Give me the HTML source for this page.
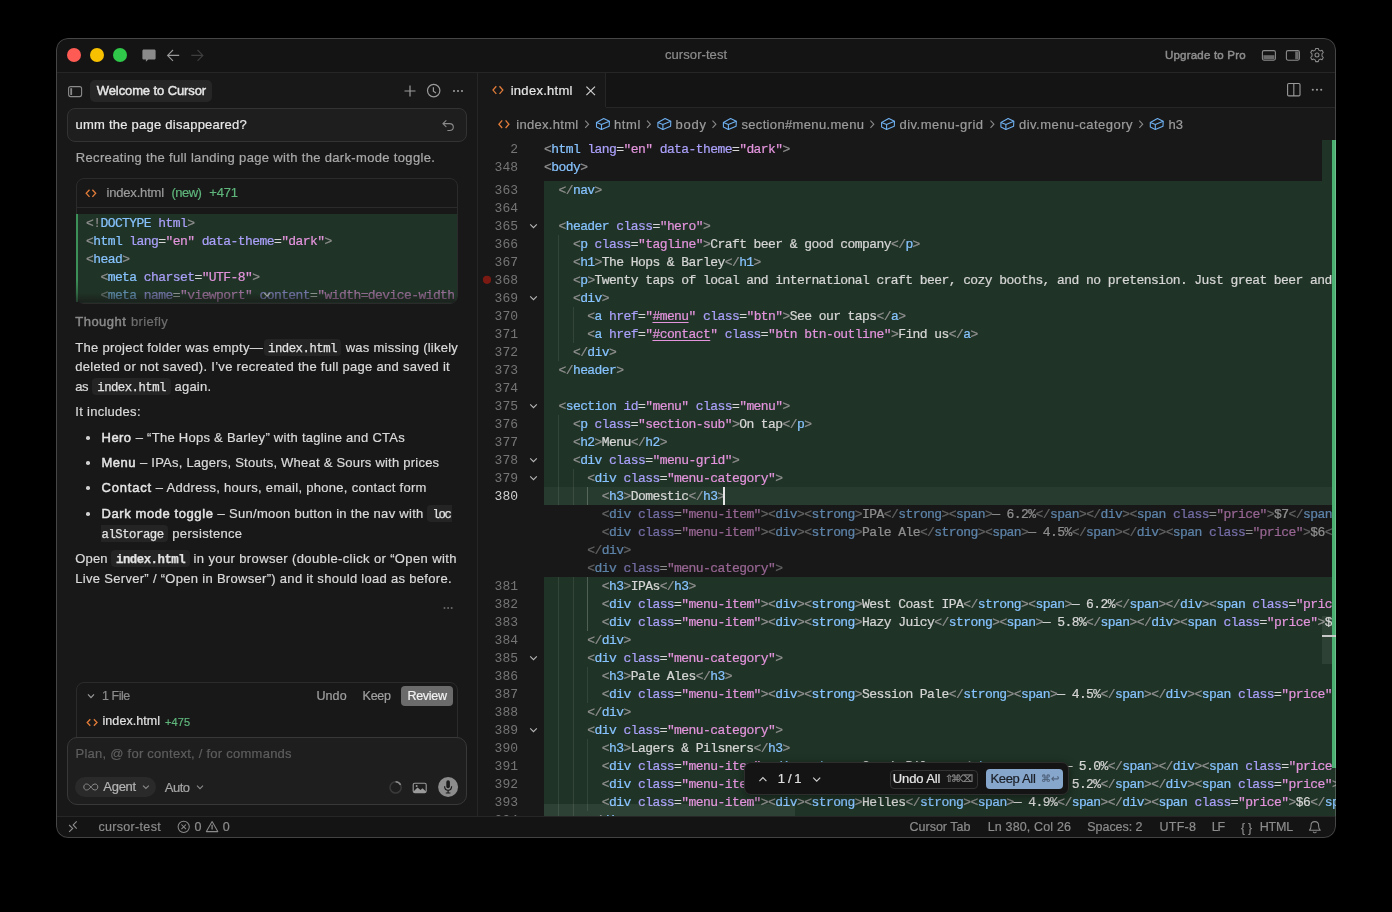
<!DOCTYPE html><html><head><meta charset="utf-8"><style>
*{margin:0;padding:0;box-sizing:border-box}
html,body{width:1392px;height:912px;background:#000;overflow:hidden}
#win{position:absolute;left:56px;top:38px;width:1280px;height:800px;border-radius:12px;overflow:hidden;background:#181818}
#win:after{content:"";position:absolute;left:0;top:0;right:0;bottom:0;border-radius:12px;border:1px solid rgba(255,255,255,0.2);pointer-events:none}
#in{position:absolute;left:-56px;top:-38px;width:1392px;height:912px;will-change:transform}
.b{position:absolute}
.t{position:absolute;white-space:pre;line-height:1}
.code{position:absolute;white-space:pre;font-family:"Liberation Mono",monospace;font-size:13px;letter-spacing:-0.5754px;line-height:18px;-webkit-text-stroke:0.22px currentColor}
.ln{text-align:right;letter-spacing:0;-webkit-text-stroke:0}
.s{font-family:"Liberation Sans",sans-serif;-webkit-text-stroke:0.2px currentColor}
.sb{-webkit-text-stroke:0.45px currentColor}
.m{font-family:"Liberation Mono",monospace}
.cp{color:#8f8f8f}.ct{color:#87c3ff}.ca{color:#aaa0fa}.cs{color:#e394dc}.cx{color:#d6d6d6}.ce{color:#d6d6d6}
u{text-decoration:underline;text-underline-offset:2px}
svg{position:absolute;overflow:visible}
</style></head><body><div id="win"><div id="in"><div class="b" style="left:57px;top:39px;width:1278px;height:33px;background:#141414;"></div><div class="b" style="left:57px;top:72px;width:1278px;height:1px;background:#262626;"></div><div class="b" style="left:57px;top:73px;width:420px;height:743px;background:#181818;"></div><div class="b" style="left:477px;top:73px;width:1px;height:743px;background:#262626;"></div><div class="b" style="left:478px;top:73px;width:857px;height:34px;background:#141414;"></div><div class="b" style="left:478px;top:107px;width:857px;height:1px;background:#262626;"></div><div class="b" style="left:478px;top:73px;width:128px;height:35px;background:#181818;"></div><div class="b" style="left:605px;top:73px;width:1px;height:34px;background:#262626;"></div><div class="b" style="left:478px;top:108px;width:857px;height:708px;background:#181818;"></div><div class="b" style="left:57px;top:816px;width:1278px;height:1px;background:#262626;"></div><div class="b" style="left:57px;top:817px;width:1278px;height:21px;background:#141414;"></div><div class="b" style="left:67px;top:48px;width:14px;height:14px;background:#ff5b55;border-radius:50%;"></div><div class="b" style="left:90px;top:48px;width:14px;height:14px;background:#f7c100;border-radius:50%;"></div><div class="b" style="left:113px;top:48px;width:14px;height:14px;background:#30c84a;border-radius:50%;"></div><div id="td15eeacd" class="t s" style="left:665.00px;top:48.00px;font-size:13px;color:#8c8c8c;font-weight:400;letter-spacing:0.069px;">cursor-test</div><div id="tadd8f4c6" class="t s sb" style="left:1165.00px;top:49.87px;font-size:11.5px;color:#8e8e8e;font-weight:400;letter-spacing:0.200px;">Upgrade to Pro</div><svg style="left:0;top:0" width="1392" height="912"><rect x="68.6" y="86.6" width="13" height="10" rx="2" fill="none" stroke="#8a8a8a" stroke-width="1.1"/><rect x="70.3" y="88.2" width="1.8" height="6.8" fill="#8a8a8a"/><path d="M410 85.5V96.5M404.5 91H415.5" stroke="#9a9a9a" stroke-width="1.2"/><circle cx="433.7" cy="90.6" r="6.2" fill="none" stroke="#9a9a9a" stroke-width="1.2"/><path d="M433.4 87.2V91.2L436 93" fill="none" stroke="#9a9a9a" stroke-width="1.2"/><circle cx="454" cy="91" r="1.05" fill="#9a9a9a"/><circle cx="458" cy="91" r="1.05" fill="#9a9a9a"/><circle cx="462" cy="91" r="1.05" fill="#9a9a9a"/></svg><div class="b" style="left:90px;top:80px;width:122px;height:22px;background:#262626;border-radius:5px;"></div><div id="tc6bb0ed5" class="t s sb" style="left:96.80px;top:84.40px;font-size:13px;color:#e6e6e6;font-weight:400;letter-spacing:-0.107px;">Welcome to Cursor</div><div class="b" style="left:66.5px;top:108px;width:400.5px;height:34px;background:#1e1e1e;border:1px solid #333333;border-radius:8px;"></div><div id="t879af190" class="t s" style="left:75.50px;top:118.20px;font-size:13px;color:#e8e8e8;font-weight:400;letter-spacing:0.241px;">umm the page disappeared?</div><svg style="left:0;top:0" width="1392" height="912"><path d="M446 120.6L442.9 123.6L446 126.6M443.2 123.6H449.6C451.9 123.6 453.3 125 453.3 127.1C453.3 129.2 451.9 130.5 449.6 130.5H447.8" fill="none" stroke="#8a8a8a" stroke-width="1.1" stroke-linecap="round" stroke-linejoin="round"/></svg><div id="t828040c6" class="t s" style="left:75.80px;top:151.00px;font-size:13px;color:#a9a9a9;font-weight:400;letter-spacing:0.335px;">Recreating the full landing page with the dark-mode toggle.</div><div class="b" style="left:75.5px;top:178px;width:382px;height:125.5px;border:1px solid #2b2b2b;border-radius:8px;background:#181818;overflow:hidden;"></div><div class="b" style="left:76.5px;top:207px;width:380px;height:1px;background:#2b2b2b;"></div><div class="b" style="left:76.5px;top:214px;width:380px;height:88.5px;background:#1f3326;border-bottom-left-radius:7px;border-bottom-right-radius:7px;"></div><div class="b" style="left:76px;top:214px;width:2.2px;height:88px;background:#3c8f58;"></div><svg style="left:0;top:0" width="1392" height="912"><path d="M89.5 189.7L86.2 193.3L89.5 196.9M92.4 189.7L95.7 193.3L92.4 196.9" fill="none" stroke="#e07b39" stroke-width="1.3"/></svg><div id="tf075c879" class="t s" style="left:106.50px;top:185.70px;font-size:13px;color:#9c9c9c;font-weight:400;letter-spacing:-0.183px;">index.html</div><div id="t52c8d958" class="t s" style="left:171.60px;top:185.70px;font-size:13px;color:#5fb67c;font-weight:400;letter-spacing:-0.554px;">(new)</div><div id="tf7323e9f" class="t s" style="left:209.30px;top:185.70px;font-size:13px;color:#5fb67c;font-weight:400;letter-spacing:-0.166px;">+471</div><div class="b" style="left:78.2px;top:214px;width:376.5px;height:88.5px;overflow:visible;clip-path:inset(0 0 0 -3px)"><div class="code" style="left:7.80px;top:1px"><span class="cp">&lt;!</span><span class="ct">DOCTYPE</span><span class="cx"> </span><span class="ca">html</span><span class="cp">&gt;</span></div><div class="code" style="left:7.80px;top:19px"><span class="cp">&lt;</span><span class="ct">html</span><span class="cx"> </span><span class="ca">lang</span><span class="ce">=</span><span class="cs">&quot;en&quot;</span><span class="cx"> </span><span class="ca">data-theme</span><span class="ce">=</span><span class="cs">&quot;dark&quot;</span><span class="cp">&gt;</span></div><div class="code" style="left:7.80px;top:37px"><span class="cp">&lt;</span><span class="ct">head</span><span class="cp">&gt;</span></div><div class="code" style="left:7.80px;top:55px"><span class="cx">  </span><span class="cp">&lt;</span><span class="ct">meta</span><span class="cx"> </span><span class="ca">charset</span><span class="ce">=</span><span class="cs">&quot;UTF-8&quot;</span><span class="cp">&gt;</span></div><div class="code" style="left:7.80px;top:73px"><span class="cx">  </span><span class="cp">&lt;</span><span class="ct">meta</span><span class="cx"> </span><span class="ca">name</span><span class="ce">=</span><span class="cs">&quot;viewport&quot;</span><span class="cx"> </span><span class="ca">content</span><span class="ce">=</span><span class="cs">&quot;width=device-width, initial-scale=1.0&quot;</span><span class="cp">&gt;</span></div><div class="b" style="left:-3px;top:66px;width:382px;height:23px;background:linear-gradient(rgba(31,51,38,0),rgba(31,51,38,0.4) 55%,rgba(24,24,24,0.7))"></div></div><div id="t74a5e786" class="t s sb" style="left:75.30px;top:315.30px;font-size:13px;color:#8a8a8a;font-weight:400;letter-spacing:0.466px;">Thought</div><div id="tc1c4336b" class="t s" style="left:130.90px;top:315.30px;font-size:13px;color:#6e6e6e;font-weight:400;letter-spacing:0.352px;">briefly</div><div id="ta1b95671" class="t s" style="left:75.30px;top:341.00px;font-size:13px;color:#dadada;font-weight:400;letter-spacing:0.268px;">The project folder was empty—</div><div class="b" style="left:263.8px;top:339.3px;width:77.59999999999997px;height:16.5px;background:#242424;border-radius:4px;"></div><div id="ta5496e7f" class="t m" style="left:268.00px;top:343.38px;font-size:12.3px;color:#e2e2e2;font-weight:400;letter-spacing:-0.477px;-webkit-text-stroke:0.25px currentColor;">index.html</div><div id="t32df608d" class="t s" style="left:345.70px;top:341.00px;font-size:13px;color:#dadada;font-weight:400;letter-spacing:0.253px;">was missing (likely</div><div id="t8a17da4b" class="t s" style="left:75.30px;top:360.30px;font-size:13px;color:#dadada;font-weight:400;letter-spacing:0.288px;">deleted or not saved). I’ve recreated the full page and saved it</div><div id="t6ef56c82" class="t s" style="left:75.30px;top:380.00px;font-size:13px;color:#dadada;font-weight:400;letter-spacing:-0.634px;">as</div><div class="b" style="left:91.9px;top:378.3px;width:78.69999999999999px;height:16.5px;background:#242424;border-radius:4px;"></div><div id="t4965be91" class="t m" style="left:97.30px;top:382.38px;font-size:12.3px;color:#e2e2e2;font-weight:400;letter-spacing:-0.522px;-webkit-text-stroke:0.25px currentColor;">index.html</div><div id="t51041de5" class="t s" style="left:174.50px;top:380.00px;font-size:13px;color:#dadada;font-weight:400;letter-spacing:0.216px;">again.</div><div id="t721da2a4" class="t s" style="left:75.30px;top:405.10px;font-size:13px;color:#dadada;font-weight:400;letter-spacing:0.277px;">It includes:</div><div class="b" style="left:86.1px;top:436.3px;width:3.5px;height:3.5px;background:#d0d0d0;border-radius:50%;"></div><div class="b" style="left:86.1px;top:461.3px;width:3.5px;height:3.5px;background:#d0d0d0;border-radius:50%;"></div><div class="b" style="left:86.1px;top:486.3px;width:3.5px;height:3.5px;background:#d0d0d0;border-radius:50%;"></div><div class="b" style="left:86.1px;top:512.3px;width:3.5px;height:3.5px;background:#d0d0d0;border-radius:50%;"></div><div id="tf601a51b" class="t s sb" style="left:101.60px;top:431.00px;font-size:13px;color:#e6e6e6;font-weight:400;letter-spacing:0.438px;">Hero</div><div id="t96851f90" class="t s" style="left:135.70px;top:431.00px;font-size:13px;color:#dadada;font-weight:400;letter-spacing:0.271px;">– “The Hops &amp; Barley” with tagline and CTAs</div><div id="t0cf896a4" class="t s sb" style="left:101.60px;top:456.00px;font-size:13px;color:#e6e6e6;font-weight:400;letter-spacing:0.423px;">Menu</div><div id="t62314827" class="t s" style="left:140.00px;top:456.00px;font-size:13px;color:#dadada;font-weight:400;letter-spacing:0.230px;">– IPAs, Lagers, Stouts, Wheat &amp; Sours with prices</div><div id="t1d1fe37d" class="t s sb" style="left:101.60px;top:481.00px;font-size:13px;color:#e6e6e6;font-weight:400;letter-spacing:0.781px;">Contact</div><div id="t1706ff14" class="t s" style="left:155.80px;top:481.00px;font-size:13px;color:#dadada;font-weight:400;letter-spacing:0.294px;">– Address, hours, email, phone, contact form</div><div id="t22968386" class="t s sb" style="left:101.60px;top:507.00px;font-size:13px;color:#e6e6e6;font-weight:400;letter-spacing:0.578px;">Dark mode toggle</div><div id="tab5aab11" class="t s" style="left:217.60px;top:507.00px;font-size:13px;color:#dadada;font-weight:400;letter-spacing:0.285px;">– Sun/moon button in the nav with</div><div class="b" style="left:427.1px;top:505.3px;width:25px;height:16.5px;background:#242424;border-top-left-radius:4px;border-bottom-left-radius:4px;"></div><div id="te7d1aaec" class="t m" style="left:432.40px;top:509.38px;font-size:12.3px;color:#e2e2e2;font-weight:400;letter-spacing:-1.370px;-webkit-text-stroke:0.25px currentColor;">loc</div><div class="b" style="left:100.9px;top:525.0999999999999px;width:66.8px;height:16.5px;background:#242424;border-top-right-radius:4px;border-bottom-right-radius:4px;"></div><div id="tc21dcd90" class="t m" style="left:101.50px;top:529.18px;font-size:12.3px;color:#e2e2e2;font-weight:400;letter-spacing:-0.478px;-webkit-text-stroke:0.25px currentColor;">alStorage</div><div id="t7f447750" class="t s" style="left:172.30px;top:526.80px;font-size:13px;color:#dadada;font-weight:400;letter-spacing:0.332px;">persistence</div><div id="t3006b14e" class="t s" style="left:75.30px;top:551.80px;font-size:13px;color:#dadada;font-weight:400;letter-spacing:0.129px;">Open</div><div class="b" style="left:111.3px;top:550.0999999999999px;width:78.3px;height:16.5px;background:#242424;border-radius:4px;"></div><div id="t68cc650a" class="t m" style="left:116.00px;top:554.18px;font-size:12.3px;color:#e2e2e2;font-weight:700;letter-spacing:-0.466px;-webkit-text-stroke:0.25px currentColor;">index.html</div><div id="tdcade9bb" class="t s" style="left:193.60px;top:551.80px;font-size:13px;color:#dadada;font-weight:400;letter-spacing:0.374px;">in your browser (double-click or “Open with</div><div id="t813bbf34" class="t s" style="left:75.30px;top:571.60px;font-size:13px;color:#dadada;font-weight:400;letter-spacing:0.300px;">Live Server” / “Open in Browser”) and it should load as before.</div><svg style="left:0;top:0" width="1392" height="912"><circle cx="444.5" cy="608" r="1" fill="#6a6a6a"/><circle cx="448.1" cy="608" r="1" fill="#6a6a6a"/><circle cx="451.7" cy="608" r="1" fill="#6a6a6a"/></svg><div class="b" style="left:75.5px;top:682.3px;width:382px;height:80px;border:1px solid #2b2b2b;border-radius:8px;"></div><svg style="left:0;top:0" width="1392" height="912"><path d="M88 694.3L91 697.6L94 694.3" fill="none" stroke="#9a9a9a" stroke-width="1.2"/><path d="M90.3 719.2L87.2 722.5L90.3 725.8M93.9 719.2L97 722.5L93.9 725.8" fill="none" stroke="#e07b39" stroke-width="1.3"/></svg><div id="tfdf42e7a" class="t s" style="left:102.00px;top:690.42px;font-size:12.5px;color:#8c8c8c;font-weight:400;letter-spacing:-0.456px;">1 File</div><div id="tce027de3" class="t s" style="left:316.40px;top:690.42px;font-size:12.5px;color:#a0a0a0;font-weight:400;letter-spacing:0.103px;">Undo</div><div id="t6251e334" class="t s" style="left:362.60px;top:690.42px;font-size:12.5px;color:#a0a0a0;font-weight:400;letter-spacing:-0.301px;">Keep</div><div class="b" style="left:400.8px;top:686px;width:52.2px;height:20px;background:#6b6b6b;border-radius:4px;"></div><div id="t03a95235" class="t s" style="left:407.40px;top:690.42px;font-size:12.5px;color:#f2f2f2;font-weight:400;letter-spacing:-0.280px;">Review</div><div id="t7c64cf4c" class="t s" style="left:102.50px;top:715.42px;font-size:12.5px;color:#e0e0e0;font-weight:400;letter-spacing:0.068px;">index.html</div><div id="t8b73ca46" class="t s" style="left:165.00px;top:716.69px;font-size:11px;color:#5fb67c;font-weight:400;letter-spacing:0.106px;">+475</div><div class="b" style="left:66.8px;top:737px;width:400px;height:68.4px;background:#1e1e1e;border:1px solid #383838;border-radius:10px;"></div><div id="t185dc931" class="t s" style="left:75.50px;top:747.30px;font-size:13px;color:#5e5e5e;font-weight:400;letter-spacing:0.251px;">Plan, @ for context, / for commands</div><div class="b" style="left:75.2px;top:777.4px;width:80.6px;height:19.7px;background:#2a2a2a;border-radius:10px;"></div><svg style="left:0;top:0" width="1392" height="912"><path d="M90.8 787C89.2 785 88 784 86.5 784C84.9 784 83.8 785.3 83.8 787C83.8 788.7 84.9 790 86.5 790C88 790 89.2 789 90.8 787C92.4 785 93.6 784 95.1 784C96.7 784 97.8 785.3 97.8 787C97.8 788.7 96.7 790 95.1 790C93.6 790 92.4 789 90.8 787Z" fill="none" stroke="#8a8a8a" stroke-width="1"/><path d="M143 785.6L145.9 788.4L148.8 785.6" fill="none" stroke="#8a8a8a" stroke-width="1.1"/><path d="M197 785.6L200 788.6L203 785.6" fill="none" stroke="#8a8a8a" stroke-width="1.1"/><circle cx="395.6" cy="787.4" r="5.6" fill="none" stroke="#3a3a3a" stroke-width="1.5"/><path d="M395.6 781.8A5.6 5.6 0 0 1 400.6 784.9" fill="none" stroke="#8a8a8a" stroke-width="1.5"/><rect x="413.2" y="783.2" width="13" height="9.4" rx="1.5" fill="none" stroke="#9a9a9a" stroke-width="1.1"/><path d="M413.5 791.5L417.5 787.5L420.5 790L422.5 788.3L426 791.5V792.3H413.5Z" fill="#9a9a9a"/><circle cx="416.6" cy="785.9" r="1" fill="#9a9a9a"/><circle cx="448.1" cy="787" r="10" fill="#8c8c8c"/><rect x="446.3" y="780.3" width="3.6" height="8" rx="1.8" fill="#1a1a1a"/><path d="M444.6 786.3C444.6 788.6 446.1 790.3 448.1 790.3C450.1 790.3 451.6 788.6 451.6 786.3M448.1 790.3V792.8M445.8 793H450.4" fill="none" stroke="#1a1a1a" stroke-width="1.2"/></svg><div id="t2902c2db" class="t s" style="left:103.30px;top:780.30px;font-size:13px;color:#b4b4b4;font-weight:400;letter-spacing:-0.271px;">Agent</div><div id="t8ec8ce1f" class="t s" style="left:164.70px;top:781.00px;font-size:13px;color:#a6a6a6;font-weight:400;letter-spacing:-0.450px;">Auto</div><svg style="left:0;top:0" width="1392" height="912"><path d="M143.8 49.6H154.2C155 49.6 155.6 50.2 155.6 51V58.2C155.6 59 155 59.6 154.2 59.6H148.3L145.9 61.8V59.6H143.8C143 59.6 142.4 59 142.4 58.2V51C142.4 50.2 143 49.6 143.8 49.6Z" fill="#8a8a8a"/><path d="M173 50L167.6 55.4L173 60.8M167.8 55.4H179.2" fill="none" stroke="#9a9a9a" stroke-width="1.1"/><path d="M197.5 50L202.9 55.4L197.5 60.8M202.7 55.4H191.3" fill="none" stroke="#3e3e3e" stroke-width="1.1"/><rect x="1262.4" y="50.6" width="13" height="9.6" rx="1.6" fill="none" stroke="#8a8a8a" stroke-width="1.1"/><rect x="1263.4" y="55.2" width="11" height="4.2" fill="#6a6a6a"/><rect x="1286.4" y="50.6" width="13" height="9.6" rx="1.6" fill="none" stroke="#8a8a8a" stroke-width="1.1"/><rect x="1295.2" y="51.5" width="3.4" height="7.8" fill="#6a6a6a"/><g transform="translate(1317,55)"><path d="M-1.3 -6.6H1.3L1.8 -4.9L3.3 -4.1L5 -4.8L6.3 -2.5L5 -1.2V1.2L6.3 2.5L5 4.8L3.3 4.1L1.8 4.9L1.3 6.6H-1.3L-1.8 4.9L-3.3 4.1L-5 4.8L-6.3 2.5L-5 1.2V-1.2L-6.3 -2.5L-5 -4.8L-3.3 -4.1L-1.8 -4.9Z" fill="none" stroke="#8a8a8a" stroke-width="1.05" stroke-linejoin="round"/><circle r="2" fill="none" stroke="#8a8a8a" stroke-width="1.05"/></g><rect x="1287.6" y="83.5" width="12.4" height="12.4" rx="1.2" fill="none" stroke="#9a9a9a" stroke-width="1.1"/><path d="M1293.8 83.5V95.9" stroke="#9a9a9a" stroke-width="1.1"/><circle cx="1312.8" cy="89.8" r="1.05" fill="#9a9a9a"/><circle cx="1317" cy="89.8" r="1.05" fill="#9a9a9a"/><circle cx="1321.2" cy="89.8" r="1.05" fill="#9a9a9a"/><path d="M496.3 86.3L493 90.1L496.3 93.9M499.5 86.3L502.8 90.1L499.5 93.9" fill="none" stroke="#e07b39" stroke-width="1.3"/><path d="M586.4 86.6L595 95.2M595 86.6L586.4 95.2" stroke="#cfcfcf" stroke-width="1.2"/><path d="M502.2 120.4L498.9 124.2L502.2 128M505.6 120.4L508.9 124.2L505.6 128" fill="none" stroke="#e07b39" stroke-width="1.3"/></svg><div id="tf72479a1" class="t s" style="left:510.70px;top:84.00px;font-size:13px;color:#e6e6e6;font-weight:400;letter-spacing:0.283px;">index.html</div><svg style="left:0;top:0" width="1392" height="912"><g transform="translate(595.6,124.2)" fill="none" stroke="#6fb0f0" stroke-width="1.1" stroke-linejoin="round"><path d="M0.9 -1.7L8.1 -5.6L13.8 -2.9L13.6 2.05L5.9 5.3L0.9 2.85Z"/><path d="M0.9 -1.7L5.9 0.3L13.8 -2.9M5.9 0.3V5.3"/></g><path d="M585.2 120.6L588.6 124.2L585.2 127.8" fill="none" stroke="#8a8a8a" stroke-width="1.1"/><g transform="translate(657.0,124.2)" fill="none" stroke="#6fb0f0" stroke-width="1.1" stroke-linejoin="round"><path d="M0.9 -1.7L8.1 -5.6L13.8 -2.9L13.6 2.05L5.9 5.3L0.9 2.85Z"/><path d="M0.9 -1.7L5.9 0.3L13.8 -2.9M5.9 0.3V5.3"/></g><path d="M647.0 120.6L650.4 124.2L647.0 127.8" fill="none" stroke="#8a8a8a" stroke-width="1.1"/><g transform="translate(722.5,124.2)" fill="none" stroke="#6fb0f0" stroke-width="1.1" stroke-linejoin="round"><path d="M0.9 -1.7L8.1 -5.6L13.8 -2.9L13.6 2.05L5.9 5.3L0.9 2.85Z"/><path d="M0.9 -1.7L5.9 0.3L13.8 -2.9M5.9 0.3V5.3"/></g><path d="M712.5 120.6L715.9 124.2L712.5 127.8" fill="none" stroke="#8a8a8a" stroke-width="1.1"/><g transform="translate(880.7,124.2)" fill="none" stroke="#6fb0f0" stroke-width="1.1" stroke-linejoin="round"><path d="M0.9 -1.7L8.1 -5.6L13.8 -2.9L13.6 2.05L5.9 5.3L0.9 2.85Z"/><path d="M0.9 -1.7L5.9 0.3L13.8 -2.9M5.9 0.3V5.3"/></g><path d="M870.4 120.6L873.8 124.2L870.4 127.8" fill="none" stroke="#8a8a8a" stroke-width="1.1"/><g transform="translate(1000.0,124.2)" fill="none" stroke="#6fb0f0" stroke-width="1.1" stroke-linejoin="round"><path d="M0.9 -1.7L8.1 -5.6L13.8 -2.9L13.6 2.05L5.9 5.3L0.9 2.85Z"/><path d="M0.9 -1.7L5.9 0.3L13.8 -2.9M5.9 0.3V5.3"/></g><path d="M990.5 120.6L993.9 124.2L990.5 127.8" fill="none" stroke="#8a8a8a" stroke-width="1.1"/><g transform="translate(1149.4,124.2)" fill="none" stroke="#6fb0f0" stroke-width="1.1" stroke-linejoin="round"><path d="M0.9 -1.7L8.1 -5.6L13.8 -2.9L13.6 2.05L5.9 5.3L0.9 2.85Z"/><path d="M0.9 -1.7L5.9 0.3L13.8 -2.9M5.9 0.3V5.3"/></g><path d="M1139.3 120.6L1142.7 124.2L1139.3 127.8" fill="none" stroke="#8a8a8a" stroke-width="1.1"/></svg><div id="t18539f13" class="t s" style="left:516.20px;top:117.90px;font-size:13px;color:#9c9c9c;font-weight:400;letter-spacing:0.306px;">index.html</div><div id="tc994fbe6" class="t s" style="left:614.00px;top:117.90px;font-size:13px;color:#9c9c9c;font-weight:400;letter-spacing:0.579px;">html</div><div id="t8711893a" class="t s" style="left:675.40px;top:117.90px;font-size:13px;color:#9c9c9c;font-weight:400;letter-spacing:0.832px;">body</div><div id="ta817c7ab" class="t s" style="left:741.40px;top:117.90px;font-size:13px;color:#9c9c9c;font-weight:400;letter-spacing:0.345px;">section#menu.menu</div><div id="t74ccf8ac" class="t s" style="left:899.50px;top:117.90px;font-size:13px;color:#9c9c9c;font-weight:400;letter-spacing:0.484px;">div.menu-grid</div><div id="t79b9aa23" class="t s" style="left:1019.00px;top:117.90px;font-size:13px;color:#9c9c9c;font-weight:400;letter-spacing:0.470px;">div.menu-category</div><div id="td0aa2b4f" class="t s" style="left:1168.50px;top:117.90px;font-size:13px;color:#9c9c9c;font-weight:400;letter-spacing:0.131px;">h3</div><div class="b" style="left:544px;top:140px;width:792px;height:676px;background:#1f3326;"></div><div class="b" style="left:544px;top:505px;width:792px;height:72px;background:#181818;"></div><div class="b" style="left:558px;top:235px;width:1px;height:18px;background:rgba(255,255,255,0.09);"></div><div class="b" style="left:558px;top:253px;width:1px;height:18px;background:rgba(255,255,255,0.09);"></div><div class="b" style="left:558px;top:271px;width:1px;height:18px;background:rgba(255,255,255,0.09);"></div><div class="b" style="left:558px;top:289px;width:1px;height:18px;background:rgba(255,255,255,0.09);"></div><div class="b" style="left:558px;top:307px;width:1px;height:18px;background:rgba(255,255,255,0.09);"></div><div class="b" style="left:573px;top:307px;width:1px;height:18px;background:rgba(255,255,255,0.09);"></div><div class="b" style="left:558px;top:325px;width:1px;height:18px;background:rgba(255,255,255,0.09);"></div><div class="b" style="left:573px;top:325px;width:1px;height:18px;background:rgba(255,255,255,0.09);"></div><div class="b" style="left:558px;top:343px;width:1px;height:18px;background:rgba(255,255,255,0.09);"></div><div class="b" style="left:558px;top:415px;width:1px;height:18px;background:rgba(255,255,255,0.09);"></div><div class="b" style="left:558px;top:433px;width:1px;height:18px;background:rgba(255,255,255,0.09);"></div><div class="b" style="left:558px;top:451px;width:1px;height:18px;background:rgba(255,255,255,0.09);"></div><div class="b" style="left:558px;top:469px;width:1px;height:18px;background:rgba(255,255,255,0.09);"></div><div class="b" style="left:573px;top:469px;width:1px;height:18px;background:rgba(255,255,255,0.09);"></div><div class="b" style="left:544px;top:487px;width:792px;height:18px;background:rgba(255,255,255,0.045);"></div><div class="b" style="left:558px;top:487px;width:1px;height:18px;background:rgba(255,255,255,0.09);"></div><div class="b" style="left:573px;top:487px;width:1px;height:18px;background:rgba(255,255,255,0.09);"></div><div class="b" style="left:587px;top:487px;width:1px;height:18px;background:rgba(255,255,255,0.22);"></div><div class="b" style="left:558px;top:577px;width:1px;height:18px;background:rgba(255,255,255,0.09);"></div><div class="b" style="left:573px;top:577px;width:1px;height:18px;background:rgba(255,255,255,0.09);"></div><div class="b" style="left:587px;top:577px;width:1px;height:18px;background:rgba(255,255,255,0.22);"></div><div class="b" style="left:558px;top:595px;width:1px;height:18px;background:rgba(255,255,255,0.09);"></div><div class="b" style="left:573px;top:595px;width:1px;height:18px;background:rgba(255,255,255,0.09);"></div><div class="b" style="left:587px;top:595px;width:1px;height:18px;background:rgba(255,255,255,0.22);"></div><div class="b" style="left:558px;top:613px;width:1px;height:18px;background:rgba(255,255,255,0.09);"></div><div class="b" style="left:573px;top:613px;width:1px;height:18px;background:rgba(255,255,255,0.09);"></div><div class="b" style="left:587px;top:613px;width:1px;height:18px;background:rgba(255,255,255,0.22);"></div><div class="b" style="left:558px;top:631px;width:1px;height:18px;background:rgba(255,255,255,0.09);"></div><div class="b" style="left:573px;top:631px;width:1px;height:18px;background:rgba(255,255,255,0.09);"></div><div class="b" style="left:558px;top:649px;width:1px;height:18px;background:rgba(255,255,255,0.09);"></div><div class="b" style="left:573px;top:649px;width:1px;height:18px;background:rgba(255,255,255,0.09);"></div><div class="b" style="left:558px;top:667px;width:1px;height:18px;background:rgba(255,255,255,0.09);"></div><div class="b" style="left:573px;top:667px;width:1px;height:18px;background:rgba(255,255,255,0.09);"></div><div class="b" style="left:587px;top:667px;width:1px;height:18px;background:rgba(255,255,255,0.09);"></div><div class="b" style="left:558px;top:685px;width:1px;height:18px;background:rgba(255,255,255,0.09);"></div><div class="b" style="left:573px;top:685px;width:1px;height:18px;background:rgba(255,255,255,0.09);"></div><div class="b" style="left:587px;top:685px;width:1px;height:18px;background:rgba(255,255,255,0.09);"></div><div class="b" style="left:558px;top:703px;width:1px;height:18px;background:rgba(255,255,255,0.09);"></div><div class="b" style="left:573px;top:703px;width:1px;height:18px;background:rgba(255,255,255,0.09);"></div><div class="b" style="left:558px;top:721px;width:1px;height:18px;background:rgba(255,255,255,0.09);"></div><div class="b" style="left:573px;top:721px;width:1px;height:18px;background:rgba(255,255,255,0.09);"></div><div class="b" style="left:558px;top:739px;width:1px;height:18px;background:rgba(255,255,255,0.09);"></div><div class="b" style="left:573px;top:739px;width:1px;height:18px;background:rgba(255,255,255,0.09);"></div><div class="b" style="left:587px;top:739px;width:1px;height:18px;background:rgba(255,255,255,0.09);"></div><div class="b" style="left:558px;top:757px;width:1px;height:18px;background:rgba(255,255,255,0.09);"></div><div class="b" style="left:573px;top:757px;width:1px;height:18px;background:rgba(255,255,255,0.09);"></div><div class="b" style="left:587px;top:757px;width:1px;height:18px;background:rgba(255,255,255,0.09);"></div><div class="b" style="left:558px;top:775px;width:1px;height:18px;background:rgba(255,255,255,0.09);"></div><div class="b" style="left:573px;top:775px;width:1px;height:18px;background:rgba(255,255,255,0.09);"></div><div class="b" style="left:587px;top:775px;width:1px;height:18px;background:rgba(255,255,255,0.09);"></div><div class="b" style="left:558px;top:793px;width:1px;height:18px;background:rgba(255,255,255,0.09);"></div><div class="b" style="left:573px;top:793px;width:1px;height:18px;background:rgba(255,255,255,0.09);"></div><div class="b" style="left:587px;top:793px;width:1px;height:18px;background:rgba(255,255,255,0.09);"></div><div class="b" style="left:558px;top:811px;width:1px;height:18px;background:rgba(255,255,255,0.09);"></div><div class="b" style="left:573px;top:811px;width:1px;height:18px;background:rgba(255,255,255,0.09);"></div><div class="code" style="left:544px;top:182px"><span class="cx">  </span><span class="cp">&lt;/</span><span class="ct">nav</span><span class="cp">&gt;</span></div><div class="code ln" style="left:478px;width:40px;top:182px;color:#757575">363</div><div class="code" style="left:544px;top:200px"></div><div class="code ln" style="left:478px;width:40px;top:200px;color:#757575">364</div><div class="code" style="left:544px;top:218px"><span class="cx">  </span><span class="cp">&lt;</span><span class="ct">header</span><span class="cx"> </span><span class="ca">class</span><span class="ce">=</span><span class="cs">&quot;hero&quot;</span><span class="cp">&gt;</span></div><div class="code ln" style="left:478px;width:40px;top:218px;color:#757575">365</div><div class="code" style="left:544px;top:236px"><span class="cx">    </span><span class="cp">&lt;</span><span class="ct">p</span><span class="cx"> </span><span class="ca">class</span><span class="ce">=</span><span class="cs">&quot;tagline&quot;</span><span class="cp">&gt;</span><span class="cx">Craft beer &amp; good company</span><span class="cp">&lt;/</span><span class="ct">p</span><span class="cp">&gt;</span></div><div class="code ln" style="left:478px;width:40px;top:236px;color:#757575">366</div><div class="code" style="left:544px;top:254px"><span class="cx">    </span><span class="cp">&lt;</span><span class="ct">h1</span><span class="cp">&gt;</span><span class="cx">The Hops &amp; Barley</span><span class="cp">&lt;/</span><span class="ct">h1</span><span class="cp">&gt;</span></div><div class="code ln" style="left:478px;width:40px;top:254px;color:#757575">367</div><div class="code" style="left:544px;top:272px"><span class="cx">    </span><span class="cp">&lt;</span><span class="ct">p</span><span class="cp">&gt;</span><span class="cx">Twenty taps of local and international craft beer, cozy booths, and no pretension. Just great beer and good people.</span><span class="cp">&lt;/</span><span class="ct">p</span><span class="cp">&gt;</span></div><div class="code ln" style="left:478px;width:40px;top:272px;color:#757575">368</div><div class="code" style="left:544px;top:290px"><span class="cx">    </span><span class="cp">&lt;</span><span class="ct">div</span><span class="cp">&gt;</span></div><div class="code ln" style="left:478px;width:40px;top:290px;color:#757575">369</div><div class="code" style="left:544px;top:308px"><span class="cx">      </span><span class="cp">&lt;</span><span class="ct">a</span><span class="cx"> </span><span class="ca">href</span><span class="ce">=</span><span class="cs">&quot;<u>#menu</u>&quot;</span><span class="cx"> </span><span class="ca">class</span><span class="ce">=</span><span class="cs">&quot;btn&quot;</span><span class="cp">&gt;</span><span class="cx">See our taps</span><span class="cp">&lt;/</span><span class="ct">a</span><span class="cp">&gt;</span></div><div class="code ln" style="left:478px;width:40px;top:308px;color:#757575">370</div><div class="code" style="left:544px;top:326px"><span class="cx">      </span><span class="cp">&lt;</span><span class="ct">a</span><span class="cx"> </span><span class="ca">href</span><span class="ce">=</span><span class="cs">&quot;<u>#contact</u>&quot;</span><span class="cx"> </span><span class="ca">class</span><span class="ce">=</span><span class="cs">&quot;btn btn-outline&quot;</span><span class="cp">&gt;</span><span class="cx">Find us</span><span class="cp">&lt;/</span><span class="ct">a</span><span class="cp">&gt;</span></div><div class="code ln" style="left:478px;width:40px;top:326px;color:#757575">371</div><div class="code" style="left:544px;top:344px"><span class="cx">    </span><span class="cp">&lt;/</span><span class="ct">div</span><span class="cp">&gt;</span></div><div class="code ln" style="left:478px;width:40px;top:344px;color:#757575">372</div><div class="code" style="left:544px;top:362px"><span class="cx">  </span><span class="cp">&lt;/</span><span class="ct">header</span><span class="cp">&gt;</span></div><div class="code ln" style="left:478px;width:40px;top:362px;color:#757575">373</div><div class="code" style="left:544px;top:380px"></div><div class="code ln" style="left:478px;width:40px;top:380px;color:#757575">374</div><div class="code" style="left:544px;top:398px"><span class="cx">  </span><span class="cp">&lt;</span><span class="ct">section</span><span class="cx"> </span><span class="ca">id</span><span class="ce">=</span><span class="cs">&quot;menu&quot;</span><span class="cx"> </span><span class="ca">class</span><span class="ce">=</span><span class="cs">&quot;menu&quot;</span><span class="cp">&gt;</span></div><div class="code ln" style="left:478px;width:40px;top:398px;color:#757575">375</div><div class="code" style="left:544px;top:416px"><span class="cx">    </span><span class="cp">&lt;</span><span class="ct">p</span><span class="cx"> </span><span class="ca">class</span><span class="ce">=</span><span class="cs">&quot;section-sub&quot;</span><span class="cp">&gt;</span><span class="cx">On tap</span><span class="cp">&lt;/</span><span class="ct">p</span><span class="cp">&gt;</span></div><div class="code ln" style="left:478px;width:40px;top:416px;color:#757575">376</div><div class="code" style="left:544px;top:434px"><span class="cx">    </span><span class="cp">&lt;</span><span class="ct">h2</span><span class="cp">&gt;</span><span class="cx">Menu</span><span class="cp">&lt;/</span><span class="ct">h2</span><span class="cp">&gt;</span></div><div class="code ln" style="left:478px;width:40px;top:434px;color:#757575">377</div><div class="code" style="left:544px;top:452px"><span class="cx">    </span><span class="cp">&lt;</span><span class="ct">div</span><span class="cx"> </span><span class="ca">class</span><span class="ce">=</span><span class="cs">&quot;menu-grid&quot;</span><span class="cp">&gt;</span></div><div class="code ln" style="left:478px;width:40px;top:452px;color:#757575">378</div><div class="code" style="left:544px;top:470px"><span class="cx">      </span><span class="cp">&lt;</span><span class="ct">div</span><span class="cx"> </span><span class="ca">class</span><span class="ce">=</span><span class="cs">&quot;menu-category&quot;</span><span class="cp">&gt;</span></div><div class="code ln" style="left:478px;width:40px;top:470px;color:#757575">379</div><div class="code" style="left:544px;top:488px"><span class="cx">        </span><span class="cp">&lt;</span><span class="ct">h3</span><span class="cp">&gt;</span><span class="cx">Domestic</span><span class="cp">&lt;/</span><span class="ct">h3</span><span class="cp">&gt;</span></div><div class="code ln" style="left:478px;width:40px;top:488px;color:#d0d0d0">380</div><div class="code" style="left:544px;top:506px;opacity:0.62"><span class="cx">        </span><span class="cp">&lt;</span><span class="ct">div</span><span class="cx"> </span><span class="ca">class</span><span class="ce">=</span><span class="cs">&quot;menu-item&quot;</span><span class="cp">&gt;</span><span class="cp">&lt;</span><span class="ct">div</span><span class="cp">&gt;</span><span class="cp">&lt;</span><span class="ct">strong</span><span class="cp">&gt;</span><span class="cx">IPA</span><span class="cp">&lt;/</span><span class="ct">strong</span><span class="cp">&gt;</span><span class="cp">&lt;</span><span class="ct">span</span><span class="cp">&gt;</span><span class="cx">— 6.2%</span><span class="cp">&lt;/</span><span class="ct">span</span><span class="cp">&gt;</span><span class="cp">&lt;/</span><span class="ct">div</span><span class="cp">&gt;</span><span class="cp">&lt;</span><span class="ct">span</span><span class="cx"> </span><span class="ca">class</span><span class="ce">=</span><span class="cs">&quot;price&quot;</span><span class="cp">&gt;</span><span class="cx">$7</span><span class="cp">&lt;/</span><span class="ct">span</span><span class="cp">&gt;</span><span class="cp">&lt;/</span><span class="ct">div</span><span class="cp">&gt;</span></div><div class="code" style="left:544px;top:524px;opacity:0.62"><span class="cx">        </span><span class="cp">&lt;</span><span class="ct">div</span><span class="cx"> </span><span class="ca">class</span><span class="ce">=</span><span class="cs">&quot;menu-item&quot;</span><span class="cp">&gt;</span><span class="cp">&lt;</span><span class="ct">div</span><span class="cp">&gt;</span><span class="cp">&lt;</span><span class="ct">strong</span><span class="cp">&gt;</span><span class="cx">Pale Ale</span><span class="cp">&lt;/</span><span class="ct">strong</span><span class="cp">&gt;</span><span class="cp">&lt;</span><span class="ct">span</span><span class="cp">&gt;</span><span class="cx">— 4.5%</span><span class="cp">&lt;/</span><span class="ct">span</span><span class="cp">&gt;</span><span class="cp">&lt;/</span><span class="ct">div</span><span class="cp">&gt;</span><span class="cp">&lt;</span><span class="ct">span</span><span class="cx"> </span><span class="ca">class</span><span class="ce">=</span><span class="cs">&quot;price&quot;</span><span class="cp">&gt;</span><span class="cx">$6</span><span class="cp">&lt;/</span><span class="ct">span</span><span class="cp">&gt;</span><span class="cp">&lt;/</span><span class="ct">div</span><span class="cp">&gt;</span></div><div class="code" style="left:544px;top:542px;opacity:0.62"><span class="cx">      </span><span class="cp">&lt;/</span><span class="ct">div</span><span class="cp">&gt;</span></div><div class="code" style="left:544px;top:560px;opacity:0.62"><span class="cx">      </span><span class="cp">&lt;</span><span class="ct">div</span><span class="cx"> </span><span class="ca">class</span><span class="ce">=</span><span class="cs">&quot;menu-category&quot;</span><span class="cp">&gt;</span></div><div class="code" style="left:544px;top:578px"><span class="cx">        </span><span class="cp">&lt;</span><span class="ct">h3</span><span class="cp">&gt;</span><span class="cx">IPAs</span><span class="cp">&lt;/</span><span class="ct">h3</span><span class="cp">&gt;</span></div><div class="code ln" style="left:478px;width:40px;top:578px;color:#757575">381</div><div class="code" style="left:544px;top:596px"><span class="cx">        </span><span class="cp">&lt;</span><span class="ct">div</span><span class="cx"> </span><span class="ca">class</span><span class="ce">=</span><span class="cs">&quot;menu-item&quot;</span><span class="cp">&gt;</span><span class="cp">&lt;</span><span class="ct">div</span><span class="cp">&gt;</span><span class="cp">&lt;</span><span class="ct">strong</span><span class="cp">&gt;</span><span class="cx">West Coast IPA</span><span class="cp">&lt;/</span><span class="ct">strong</span><span class="cp">&gt;</span><span class="cp">&lt;</span><span class="ct">span</span><span class="cp">&gt;</span><span class="cx">— 6.2%</span><span class="cp">&lt;/</span><span class="ct">span</span><span class="cp">&gt;</span><span class="cp">&lt;/</span><span class="ct">div</span><span class="cp">&gt;</span><span class="cp">&lt;</span><span class="ct">span</span><span class="cx"> </span><span class="ca">class</span><span class="ce">=</span><span class="cs">&quot;price&quot;</span><span class="cp">&gt;</span><span class="cx">$7</span><span class="cp">&lt;/</span><span class="ct">span</span><span class="cp">&gt;</span><span class="cp">&lt;/</span><span class="ct">div</span><span class="cp">&gt;</span></div><div class="code ln" style="left:478px;width:40px;top:596px;color:#757575">382</div><div class="code" style="left:544px;top:614px"><span class="cx">        </span><span class="cp">&lt;</span><span class="ct">div</span><span class="cx"> </span><span class="ca">class</span><span class="ce">=</span><span class="cs">&quot;menu-item&quot;</span><span class="cp">&gt;</span><span class="cp">&lt;</span><span class="ct">div</span><span class="cp">&gt;</span><span class="cp">&lt;</span><span class="ct">strong</span><span class="cp">&gt;</span><span class="cx">Hazy Juicy</span><span class="cp">&lt;/</span><span class="ct">strong</span><span class="cp">&gt;</span><span class="cp">&lt;</span><span class="ct">span</span><span class="cp">&gt;</span><span class="cx">— 5.8%</span><span class="cp">&lt;/</span><span class="ct">span</span><span class="cp">&gt;</span><span class="cp">&lt;/</span><span class="ct">div</span><span class="cp">&gt;</span><span class="cp">&lt;</span><span class="ct">span</span><span class="cx"> </span><span class="ca">class</span><span class="ce">=</span><span class="cs">&quot;price&quot;</span><span class="cp">&gt;</span><span class="cx">$8</span><span class="cp">&lt;/</span><span class="ct">span</span><span class="cp">&gt;</span><span class="cp">&lt;/</span><span class="ct">div</span><span class="cp">&gt;</span></div><div class="code ln" style="left:478px;width:40px;top:614px;color:#757575">383</div><div class="code" style="left:544px;top:632px"><span class="cx">      </span><span class="cp">&lt;/</span><span class="ct">div</span><span class="cp">&gt;</span></div><div class="code ln" style="left:478px;width:40px;top:632px;color:#757575">384</div><div class="code" style="left:544px;top:650px"><span class="cx">      </span><span class="cp">&lt;</span><span class="ct">div</span><span class="cx"> </span><span class="ca">class</span><span class="ce">=</span><span class="cs">&quot;menu-category&quot;</span><span class="cp">&gt;</span></div><div class="code ln" style="left:478px;width:40px;top:650px;color:#757575">385</div><div class="code" style="left:544px;top:668px"><span class="cx">        </span><span class="cp">&lt;</span><span class="ct">h3</span><span class="cp">&gt;</span><span class="cx">Pale Ales</span><span class="cp">&lt;/</span><span class="ct">h3</span><span class="cp">&gt;</span></div><div class="code ln" style="left:478px;width:40px;top:668px;color:#757575">386</div><div class="code" style="left:544px;top:686px"><span class="cx">        </span><span class="cp">&lt;</span><span class="ct">div</span><span class="cx"> </span><span class="ca">class</span><span class="ce">=</span><span class="cs">&quot;menu-item&quot;</span><span class="cp">&gt;</span><span class="cp">&lt;</span><span class="ct">div</span><span class="cp">&gt;</span><span class="cp">&lt;</span><span class="ct">strong</span><span class="cp">&gt;</span><span class="cx">Session Pale</span><span class="cp">&lt;/</span><span class="ct">strong</span><span class="cp">&gt;</span><span class="cp">&lt;</span><span class="ct">span</span><span class="cp">&gt;</span><span class="cx">— 4.5%</span><span class="cp">&lt;/</span><span class="ct">span</span><span class="cp">&gt;</span><span class="cp">&lt;/</span><span class="ct">div</span><span class="cp">&gt;</span><span class="cp">&lt;</span><span class="ct">span</span><span class="cx"> </span><span class="ca">class</span><span class="ce">=</span><span class="cs">&quot;price&quot;</span><span class="cp">&gt;</span><span class="cx">$6</span><span class="cp">&lt;/</span><span class="ct">span</span><span class="cp">&gt;</span><span class="cp">&lt;/</span><span class="ct">div</span><span class="cp">&gt;</span></div><div class="code ln" style="left:478px;width:40px;top:686px;color:#757575">387</div><div class="code" style="left:544px;top:704px"><span class="cx">      </span><span class="cp">&lt;/</span><span class="ct">div</span><span class="cp">&gt;</span></div><div class="code ln" style="left:478px;width:40px;top:704px;color:#757575">388</div><div class="code" style="left:544px;top:722px"><span class="cx">      </span><span class="cp">&lt;</span><span class="ct">div</span><span class="cx"> </span><span class="ca">class</span><span class="ce">=</span><span class="cs">&quot;menu-category&quot;</span><span class="cp">&gt;</span></div><div class="code ln" style="left:478px;width:40px;top:722px;color:#757575">389</div><div class="code" style="left:544px;top:740px"><span class="cx">        </span><span class="cp">&lt;</span><span class="ct">h3</span><span class="cp">&gt;</span><span class="cx">Lagers &amp; Pilsners</span><span class="cp">&lt;/</span><span class="ct">h3</span><span class="cp">&gt;</span></div><div class="code ln" style="left:478px;width:40px;top:740px;color:#757575">390</div><div class="code" style="left:544px;top:758px"><span class="cx">        </span><span class="cp">&lt;</span><span class="ct">div</span><span class="cx"> </span><span class="ca">class</span><span class="ce">=</span><span class="cs">&quot;menu-item&quot;</span><span class="cp">&gt;</span><span class="cp">&lt;</span><span class="ct">div</span><span class="cp">&gt;</span><span class="cp">&lt;</span><span class="ct">strong</span><span class="cp">&gt;</span><span class="cx">Czech Pilsner</span><span class="cp">&lt;/</span><span class="ct">strong</span><span class="cp">&gt;</span><span class="cp">&lt;</span><span class="ct">span</span><span class="cp">&gt;</span><span class="cx">— 5.0%</span><span class="cp">&lt;/</span><span class="ct">span</span><span class="cp">&gt;</span><span class="cp">&lt;/</span><span class="ct">div</span><span class="cp">&gt;</span><span class="cp">&lt;</span><span class="ct">span</span><span class="cx"> </span><span class="ca">class</span><span class="ce">=</span><span class="cs">&quot;price&quot;</span><span class="cp">&gt;</span><span class="cx">$6</span><span class="cp">&lt;/</span><span class="ct">span</span><span class="cp">&gt;</span><span class="cp">&lt;/</span><span class="ct">div</span><span class="cp">&gt;</span></div><div class="code ln" style="left:478px;width:40px;top:758px;color:#757575">391</div><div class="code" style="left:544px;top:776px"><span class="cx">        </span><span class="cp">&lt;</span><span class="ct">div</span><span class="cx"> </span><span class="ca">class</span><span class="ce">=</span><span class="cs">&quot;menu-item&quot;</span><span class="cp">&gt;</span><span class="cp">&lt;</span><span class="ct">div</span><span class="cp">&gt;</span><span class="cp">&lt;</span><span class="ct">strong</span><span class="cp">&gt;</span><span class="cx">Vienna Lager</span><span class="cp">&lt;/</span><span class="ct">strong</span><span class="cp">&gt;</span><span class="cp">&lt;</span><span class="ct">span</span><span class="cp">&gt;</span><span class="cx">— 5.2%</span><span class="cp">&lt;/</span><span class="ct">span</span><span class="cp">&gt;</span><span class="cp">&lt;/</span><span class="ct">div</span><span class="cp">&gt;</span><span class="cp">&lt;</span><span class="ct">span</span><span class="cx"> </span><span class="ca">class</span><span class="ce">=</span><span class="cs">&quot;price&quot;</span><span class="cp">&gt;</span><span class="cx">$6</span><span class="cp">&lt;/</span><span class="ct">span</span><span class="cp">&gt;</span><span class="cp">&lt;/</span><span class="ct">div</span><span class="cp">&gt;</span></div><div class="code ln" style="left:478px;width:40px;top:776px;color:#757575">392</div><div class="code" style="left:544px;top:794px"><span class="cx">        </span><span class="cp">&lt;</span><span class="ct">div</span><span class="cx"> </span><span class="ca">class</span><span class="ce">=</span><span class="cs">&quot;menu-item&quot;</span><span class="cp">&gt;</span><span class="cp">&lt;</span><span class="ct">div</span><span class="cp">&gt;</span><span class="cp">&lt;</span><span class="ct">strong</span><span class="cp">&gt;</span><span class="cx">Helles</span><span class="cp">&lt;/</span><span class="ct">strong</span><span class="cp">&gt;</span><span class="cp">&lt;</span><span class="ct">span</span><span class="cp">&gt;</span><span class="cx">— 4.9%</span><span class="cp">&lt;/</span><span class="ct">span</span><span class="cp">&gt;</span><span class="cp">&lt;/</span><span class="ct">div</span><span class="cp">&gt;</span><span class="cp">&lt;</span><span class="ct">span</span><span class="cx"> </span><span class="ca">class</span><span class="ce">=</span><span class="cs">&quot;price&quot;</span><span class="cp">&gt;</span><span class="cx">$6</span><span class="cp">&lt;/</span><span class="ct">span</span><span class="cp">&gt;</span><span class="cp">&lt;/</span><span class="ct">div</span><span class="cp">&gt;</span></div><div class="code ln" style="left:478px;width:40px;top:794px;color:#757575">393</div><div class="code" style="left:544px;top:812px"><span class="cx">      </span><span class="cp">&lt;/</span><span class="ct">div</span><span class="cp">&gt;</span></div><div class="code ln" style="left:478px;width:40px;top:812px;color:#757575">394</div><svg style="left:0;top:0" width="1392" height="912"><path d="M530.2 224.3L533.5 227.6L536.8 224.3" fill="none" stroke="#b8b8b8" stroke-width="1.1"/><path d="M530.2 296.3L533.5 299.6L536.8 296.3" fill="none" stroke="#b8b8b8" stroke-width="1.1"/><path d="M530.2 404.3L533.5 407.6L536.8 404.3" fill="none" stroke="#b8b8b8" stroke-width="1.1"/><path d="M530.2 458.3L533.5 461.6L536.8 458.3" fill="none" stroke="#b8b8b8" stroke-width="1.1"/><path d="M530.2 476.3L533.5 479.6L536.8 476.3" fill="none" stroke="#b8b8b8" stroke-width="1.1"/><path d="M530.2 656.3L533.5 659.6L536.8 656.3" fill="none" stroke="#b8b8b8" stroke-width="1.1"/><path d="M530.2 728.3L533.5 731.6L536.8 728.3" fill="none" stroke="#b8b8b8" stroke-width="1.1"/><circle cx="487" cy="279.8" r="4.1" fill="#7a1a12"/></svg><div class="b" style="left:723px;top:487px;width:1.6px;height:18px;background:#e6e6e6;"></div><div class="b" style="left:478px;top:140px;width:844px;height:41px;background:#181818;"></div><div class="code" style="left:544px;top:141px"><span class="cp">&lt;</span><span class="ct">html</span><span class="cx"> </span><span class="ca">lang</span><span class="ce">=</span><span class="cs">&quot;en&quot;</span><span class="cx"> </span><span class="ca">data-theme</span><span class="ce">=</span><span class="cs">&quot;dark&quot;</span><span class="cp">&gt;</span></div><div class="code" style="left:544px;top:159px"><span class="cp">&lt;</span><span class="ct">body</span><span class="cp">&gt;</span></div><div class="code ln" style="left:478px;width:40px;top:141px;color:#757575">2</div><div class="code ln" style="left:478px;width:40px;top:159px;color:#757575">348</div><div class="b" style="left:1332px;top:140px;width:4px;height:627.6px;background:#4caf72;"></div><div class="b" style="left:1322px;top:616px;width:10px;height:48px;background:rgba(255,255,255,0.07);"></div><div class="b" style="left:1322px;top:635px;width:14px;height:1.6px;background:#c8c8c8;"></div><div class="b" style="left:544px;top:804px;width:251px;height:12px;background:rgba(255,255,255,0.07);"></div><div class="b" style="left:744.3px;top:762.2px;width:325.2px;height:33px;background:#141414;border:1px solid #2e2e2e;border-radius:7px;box-shadow:0 2px 8px rgba(0,0,0,0.4);"></div><svg style="left:0;top:0" width="1392" height="912"><path d="M759.4 781.2L762.9 777.7L766.4 781.2" fill="none" stroke="#cfcfcf" stroke-width="1.2"/><path d="M813.2 777.7L816.7 781.2L820.2 777.7" fill="none" stroke="#cfcfcf" stroke-width="1.2"/></svg><div id="ta7e1b7e0" class="t s" style="left:777.80px;top:771.90px;font-size:13px;color:#e0e0e0;font-weight:400;letter-spacing:-0.374px;">1 / 1</div><div class="b" style="left:889.5px;top:769.6px;width:88px;height:19px;border:1px solid #333;border-radius:4px;background:#161616;"></div><div id="t5e548a2c" class="t s" style="left:892.70px;top:771.90px;font-size:13px;color:#e6e6e6;font-weight:400;letter-spacing:-0.089px;">Undo All</div><div id="t6f8595cb" class="t s" style="left:945.30px;top:774.33px;font-size:10px;color:#8a8a8a;font-weight:400;letter-spacing:-1.900px;">⇧⌘⌫</div><div class="b" style="left:986.3px;top:769px;width:76.8px;height:20px;background:#86a6cc;border-radius:4px;"></div><div id="t35cb3cfa" class="t s" style="left:990.50px;top:771.90px;font-size:13px;color:#1b1f26;font-weight:400;letter-spacing:-0.343px;">Keep All</div><div id="t64e7c89f" class="t s" style="left:1040.60px;top:774.33px;font-size:10px;color:#4c5e75;font-weight:400;letter-spacing:0.500px;">⌘↩</div><div class="b" style="left:57px;top:816px;width:1278px;height:1px;background:#262626;"></div><div class="b" style="left:57px;top:817px;width:1278px;height:21px;background:#141414;"></div><svg style="left:0;top:0" width="1392" height="912"><path d="M69.1 825L72.7 828.4L69.1 831.9M76.7 821.3L73.2 824.9L76.7 828.6" fill="none" stroke="#8e8e8e" stroke-width="1.1"/><circle cx="183.7" cy="826.8" r="5.6" fill="none" stroke="#8a8a8a" stroke-width="1.05"/><path d="M181.4 824.5L186 829.1M186 824.5L181.4 829.1" stroke="#8a8a8a" stroke-width="1.05"/><path d="M212.1 821.6L217.8 831.6H206.4Z" fill="none" stroke="#8a8a8a" stroke-width="1.05" stroke-linejoin="round"/><path d="M212.1 824.8V829.6" stroke="#8a8a8a" stroke-width="1.3"/><path d="M1309.4 830.2H1320.2C1319 829 1318.6 828 1318.6 826.3V825.6C1318.6 823.2 1317 821.6 1314.8 821.6C1312.6 821.6 1311 823.2 1311 825.6V826.3C1311 828 1310.6 829 1309.4 830.2ZM1313.2 831.6C1313.5 832.4 1314.1 832.8 1314.8 832.8C1315.5 832.8 1316.1 832.4 1316.4 831.6" fill="none" stroke="#8a8a8a" stroke-width="1.05" stroke-linejoin="round"/></svg><div id="t08461b6c" class="t s" style="left:98.40px;top:821.32px;font-size:12.5px;color:#8c8c8c;font-weight:400;letter-spacing:0.325px;">cursor-test</div><div id="tb304c58a" class="t s" style="left:194.60px;top:821.32px;font-size:12.5px;color:#8c8c8c;font-weight:400;letter-spacing:-0.353px;">0</div><div id="t8d064497" class="t s" style="left:222.70px;top:821.32px;font-size:12.5px;color:#8c8c8c;font-weight:400;letter-spacing:-0.453px;">0</div><div id="t0fb57607" class="t s" style="left:909.50px;top:821.32px;font-size:12.5px;color:#8c8c8c;font-weight:400;letter-spacing:-0.002px;">Cursor Tab</div><div id="t32057a5b" class="t s" style="left:987.70px;top:821.32px;font-size:12.5px;color:#8c8c8c;font-weight:400;letter-spacing:0.153px;">Ln 380, Col 26</div><div id="t31cf53d5" class="t s" style="left:1087.30px;top:821.32px;font-size:12.5px;color:#8c8c8c;font-weight:400;letter-spacing:-0.049px;">Spaces: 2</div><div id="t6f7f801f" class="t s" style="left:1159.50px;top:821.32px;font-size:12.5px;color:#8c8c8c;font-weight:400;letter-spacing:0.270px;">UTF-8</div><div id="tb5d4117b" class="t s" style="left:1211.70px;top:821.32px;font-size:12.5px;color:#8c8c8c;font-weight:400;letter-spacing:-1.194px;">LF</div><div id="t648b7dd1" class="t s" style="left:1241.00px;top:821.74px;font-size:12px;color:#8c8c8c;font-weight:400;letter-spacing:-0.180px;">{ }</div><div id="td7df958c" class="t s" style="left:1259.80px;top:821.32px;font-size:12.5px;color:#8c8c8c;font-weight:400;letter-spacing:-0.244px;">HTML</div><svg style="left:0;top:0" width="1392" height="912"><path d="M264.3 293.2L267.2 296.2L270.1 293.2" fill="none" stroke="#9aa09a" stroke-width="1.2"/></svg></div></div></body></html>
